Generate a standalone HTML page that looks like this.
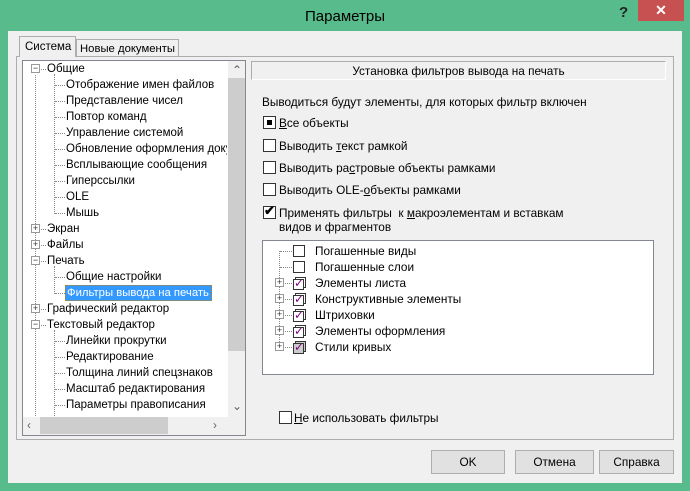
<!DOCTYPE html>
<html><head><meta charset="utf-8"><style>
*{box-sizing:border-box;margin:0;padding:0}
body{width:690px;height:491px;background:#58bb8b;position:relative;overflow:hidden;font-family:"Liberation Sans",sans-serif;font-size:11.8px;color:#000}
.a{position:absolute}
.t{position:absolute;white-space:nowrap;line-height:14px}
.cb{position:absolute;width:13px;height:13px;border:1px solid #333;background:#fff}
.btn{position:absolute;height:24px;border:1px solid #adadad;background:#e1e1e1;text-align:center;line-height:22px}
.dv{position:absolute;border-left:1px dotted #888}
.dh{position:absolute;border-top:1px dotted #888;height:0}
.ex{position:absolute;width:9px;height:9px;border:1px solid #999;background:#fff;font-size:9px;line-height:7px;text-align:center;color:#333}
.tr .t{font-size:11.5px}
</style></head><body>
<div class="t" style="left:0;width:690px;top:8px;text-align:center;font-size:15px;line-height:18px;color:#000">Параметры</div>
<div class="t" style="left:619px;top:6px;font-size:15px;font-weight:bold;color:#222">?</div>
<div class="a" style="left:638px;top:0;width:46px;height:21px;background:#c75050;color:#fff;text-align:center;font-size:14px;line-height:21px;font-weight:bold">✕</div>
<div class="a" style="left:8px;top:31px;width:674px;height:452px;background:#f0f0f0"></div>
<div class="a" style="left:16px;top:56px;width:658px;height:384px;border:1px solid #adadad;background:#f0f0f0"></div>
<div class="a" style="left:19px;top:36px;width:57px;height:21px;border:1px solid #adadad;border-bottom:none;background:#f0f0f0"></div>
<div class="t" style="left:25px;top:40px;font-size:11.5px">Система</div>
<div class="a" style="left:76px;top:39px;width:103px;height:17px;border:1px solid #adadad;border-bottom:none;background:#f0f0f0"></div>
<div class="t" style="left:80px;top:42px;font-size:11.3px">Новые документы</div>
<div class="a" style="left:22px;top:60px;width:224px;height:376px;border:1px solid #828790;background:#fff;overflow:hidden">
<div class="a" style="left:205px;top:0;width:17px;height:357px;background:#f0f0f0"></div>
<div class="a" style="left:205px;top:17px;width:17px;height:273px;background:#cdcdcd"></div>
<div class="t" style="left:209px;top:2px;color:#606060">&#8963;</div>
<div class="t" style="left:209px;top:338px;color:#606060">&#8964;</div>
<div class="a" style="left:0;top:357px;width:222px;height:17px;background:#f0f0f0"></div>
<div class="a" style="left:17px;top:357px;width:128px;height:17px;background:#cdcdcd"></div>
<div class="t" style="left:4px;top:358px;color:#606060">&lsaquo;</div>
<div class="t" style="left:190px;top:358px;color:#606060">&rsaquo;</div>
</div>
<div class="tr">
<div class="dv" style="left:35px;top:75px;height:345px"></div>
<div class="dv" style="left:54px;top:74px;height:140px"></div>
<div class="dv" style="left:54px;top:266px;height:28px"></div>
<div class="dv" style="left:54px;top:330px;height:90px"></div>
<div class="ex" style="left:31px;top:64px">−</div><div class="dh" style="left:41px;top:69px;width:5px"></div><div class="t" style="left:47px;top:62px">Общие</div>
<div class="dh" style="left:55px;top:85px;width:10px"></div><div class="t" style="left:66px;top:78px">Отображение имен файлов</div>
<div class="dh" style="left:55px;top:101px;width:10px"></div><div class="t" style="left:66px;top:94px">Представление чисел</div>
<div class="dh" style="left:55px;top:117px;width:10px"></div><div class="t" style="left:66px;top:110px">Повтор команд</div>
<div class="dh" style="left:55px;top:133px;width:10px"></div><div class="t" style="left:66px;top:126px">Управление системой</div>
<div class="dh" style="left:55px;top:149px;width:10px"></div><div class="t" style="left:66px;top:142px;width:161px;overflow:hidden">Обновление оформления документов</div>
<div class="dh" style="left:55px;top:165px;width:10px"></div><div class="t" style="left:66px;top:158px">Всплывающие сообщения</div>
<div class="dh" style="left:55px;top:181px;width:10px"></div><div class="t" style="left:66px;top:174px">Гиперссылки</div>
<div class="dh" style="left:55px;top:197px;width:10px"></div><div class="t" style="left:66px;top:190px">OLE</div>
<div class="dh" style="left:55px;top:213px;width:10px"></div><div class="t" style="left:66px;top:206px">Мышь</div>
<div class="ex" style="left:31px;top:224px">+</div><div class="dh" style="left:41px;top:229px;width:5px"></div><div class="t" style="left:47px;top:222px">Экран</div>
<div class="ex" style="left:31px;top:240px">+</div><div class="dh" style="left:41px;top:245px;width:5px"></div><div class="t" style="left:47px;top:238px">Файлы</div>
<div class="ex" style="left:31px;top:256px">−</div><div class="dh" style="left:41px;top:261px;width:5px"></div><div class="t" style="left:47px;top:254px">Печать</div>
<div class="dh" style="left:55px;top:277px;width:10px"></div><div class="t" style="left:66px;top:270px">Общие настройки</div>
<div class="dh" style="left:55px;top:293px;width:10px"></div><div class="a" style="left:65px;top:285px;width:147px;height:16px;background:#3399ff;border:1px dotted #c08000"></div><div class="t" style="left:67px;top:286px;color:#fff;font-size:11.3px">Фильтры вывода на печать</div>
<div class="ex" style="left:31px;top:304px">+</div><div class="dh" style="left:41px;top:309px;width:5px"></div><div class="t" style="left:47px;top:302px">Графический редактор</div>
<div class="ex" style="left:31px;top:320px">−</div><div class="dh" style="left:41px;top:325px;width:5px"></div><div class="t" style="left:47px;top:318px">Текстовый редактор</div>
<div class="dh" style="left:55px;top:341px;width:10px"></div><div class="t" style="left:66px;top:334px">Линейки прокрутки</div>
<div class="dh" style="left:55px;top:357px;width:10px"></div><div class="t" style="left:66px;top:350px">Редактирование</div>
<div class="dh" style="left:55px;top:373px;width:10px"></div><div class="t" style="left:66px;top:366px">Толщина линий спецзнаков</div>
<div class="dh" style="left:55px;top:389px;width:10px"></div><div class="t" style="left:66px;top:382px">Масштаб редактирования</div>
<div class="dh" style="left:55px;top:405px;width:10px"></div><div class="t" style="left:66px;top:398px">Параметры правописания</div>
</div>
<div class="a" style="left:23px;top:417px;width:205px;height:18px;background:#f0f0f0"></div>
<div class="a" style="left:40px;top:417px;width:128px;height:17px;background:#cdcdcd"></div>
<div class="t" style="left:27px;top:418px;color:#606060">&lsaquo;</div>
<div class="t" style="left:213px;top:418px;color:#606060">&rsaquo;</div>
<div class="a" style="left:251px;top:61px;width:415px;height:19px;border:1px solid #adadad;border-bottom-color:#fff;border-right-color:#fff;background:#f0f0f0"></div>
<div class="t" style="left:251px;top:64px;width:415px;text-align:center">Установка фильтров вывода на печать</div>
<div class="t" style="left:262px;top:95px">Выводиться будут элементы, для которых фильтр включен</div>
<div class="cb" style="left:263px;top:116px"></div><div class="a" style="left:267px;top:120px;width:5px;height:5px;background:#000"></div><div class="t" style="left:279px;top:116px"><u>В</u>се объекты</div>
<div class="cb" style="left:263px;top:139px"></div><div class="t" style="left:279px;top:139px">Выводить <u>т</u>екст рамкой</div>
<div class="cb" style="left:263px;top:161px"></div><div class="t" style="left:279px;top:161px">Выводить ра<u>с</u>тровые объекты рамками</div>
<div class="cb" style="left:263px;top:183px"></div><div class="t" style="left:279px;top:183px">Выводить OLE-<u>о</u>бъекты рамками</div>
<div class="cb" style="left:263px;top:206px"></div><div class="t" style="left:264px;top:204px;font-size:13px;font-weight:bold">✔</div><div class="t" style="left:279px;top:206px">Применять фильтры&nbsp; к <u>м</u>акроэлементам и вставкам<br>видов и фрагментов</div>
<div class="a" style="left:262px;top:240px;width:392px;height:135px;border:1px solid #828790;background:#fff"></div>
<div class="dv" style="left:279px;top:251px;height:97px"></div>
<div class="dh" style="left:280px;top:251px;width:12px"></div><div class="cb" style="left:293px;top:245px;width:12px;height:12px"></div><div class="t" style="left:315px;top:244px">Погашенные виды</div>
<div class="dh" style="left:280px;top:267px;width:12px"></div><div class="cb" style="left:293px;top:261px;width:12px;height:12px"></div><div class="t" style="left:315px;top:260px">Погашенные слои</div>
<div class="ex" style="left:275px;top:278px">+</div><div class="dh" style="left:285px;top:283px;width:7px"></div><div class="cb" style="left:295px;top:277px;width:11px;height:11px"></div><div class="cb" style="left:293px;top:279px;width:11px;height:11px"></div><div class="t" style="left:294px;top:276px;color:#800080">✓</div><div class="t" style="left:315px;top:276px">Элементы листа</div>
<div class="ex" style="left:275px;top:294px">+</div><div class="dh" style="left:285px;top:299px;width:7px"></div><div class="cb" style="left:295px;top:293px;width:11px;height:11px"></div><div class="cb" style="left:293px;top:295px;width:11px;height:11px"></div><div class="t" style="left:294px;top:292px;color:#800080">✓</div><div class="t" style="left:315px;top:292px">Конструктивные элементы</div>
<div class="ex" style="left:275px;top:310px">+</div><div class="dh" style="left:285px;top:315px;width:7px"></div><div class="cb" style="left:295px;top:309px;width:11px;height:11px"></div><div class="cb" style="left:293px;top:311px;width:11px;height:11px"></div><div class="t" style="left:294px;top:308px;color:#800080">✓</div><div class="t" style="left:315px;top:308px">Штриховки</div>
<div class="ex" style="left:275px;top:326px">+</div><div class="dh" style="left:285px;top:331px;width:7px"></div><div class="cb" style="left:295px;top:325px;width:11px;height:11px"></div><div class="cb" style="left:293px;top:327px;width:11px;height:11px"></div><div class="t" style="left:294px;top:324px;color:#800080">✓</div><div class="t" style="left:315px;top:324px">Элементы оформления</div>
<div class="ex" style="left:275px;top:342px">+</div><div class="dh" style="left:285px;top:347px;width:7px"></div><div class="cb" style="left:295px;top:341px;width:11px;height:11px;background:#ccc"></div><div class="cb" style="left:293px;top:343px;width:11px;height:11px;background:#ccc"></div><div class="t" style="left:294px;top:340px;color:#800080">✓</div><div class="t" style="left:315px;top:340px">Стили кривых</div>
<div class="cb" style="left:279px;top:411px"></div><div class="t" style="left:294px;top:411px"><u>Н</u>е использовать фильтры</div>
<div class="btn" style="left:431px;top:450px;width:74px">OK</div>
<div class="btn" style="left:515px;top:450px;width:79px">Отмена</div>
<div class="btn" style="left:599px;top:450px;width:75px">Справка</div>
</body></html>
